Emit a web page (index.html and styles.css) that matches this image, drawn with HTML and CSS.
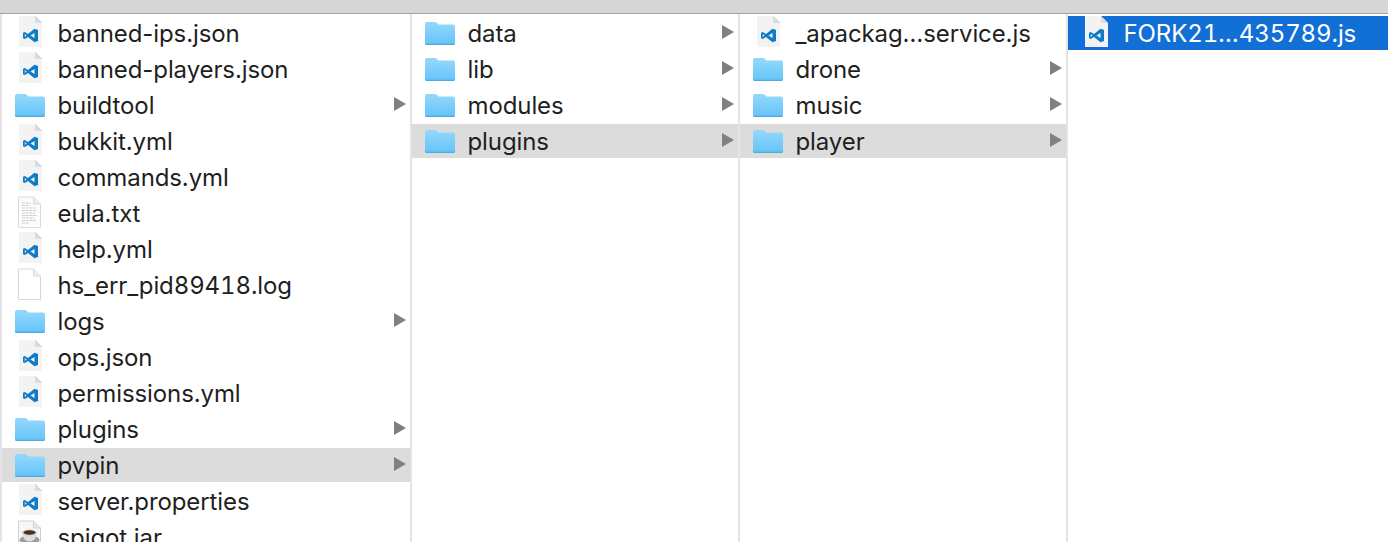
FILE: index.html
```html
<!DOCTYPE html>
<html lang="en">
<head>
<meta charset="utf-8">
<title>Finder columns</title>
<link rel="stylesheet" href="styles.css">
</head>
<body>
<svg class="defs" width="0" height="0" aria-hidden="true">
  <defs>
    <linearGradient id="fold" x1="0" y1="0" x2="0" y2="1">
      <stop offset="0" stop-color="#8ad4fb"/>
      <stop offset="1" stop-color="#64c3f8"/>
    </linearGradient>
    <symbol id="folder" viewBox="0 0 30 26">
      <path d="M0 4C0 2.800 1 2 2.200 2H9.800c1 0 1.600.4 2.200 1l1.400 1.600H28c1.200 0 2 .8 2 2V23c0 1.200-.8 2-2 2H2c-1.200 0-2-.8-2-2z" fill="#8fd6fb"/>
      <path d="M0 8.200C0 7.400.6 7 1.200 7H28.800C29.400 7 30 7.400 30 8.200V23c0 1.200-.8 2-2 2H2c-1.200 0-2-.8-2-2z" fill="url(#fold)"/>
      <path d="M0 23c0 1.200.8 2 2 2h26c1.200 0 2-.8 2-2v-.8c0 1-.8 1.600-2 1.600H2c-1.200 0-2-.6-2-1.600z" fill="#4fa9dc"/>
    </symbol>
    <symbol id="vscode" viewBox="0 0 23 31">
      <path d="M0 0H16L23 7V31H0z" fill="#f3f3f3"/>
      <path d="M16 0V7H23z" fill="#dcdcdc"/>
      <path d="M16 0L23 7" stroke="#c4c4c4" stroke-width=".6" fill="none"/>
      <path fill-rule="evenodd" d="M15.500 12 9 18.300 5.800 15.800 4 16.700V23.300L5.800 24.200 9 21.700 15.500 28 19 26.500V13.500zM15.500 17V23L11.500 20zM5.800 18.200 7.500 20 5.800 21.800z" fill="#0f7bc6" transform="translate(0 2.500) scale(1 .85)"/>
    </symbol>
    <symbol id="text" viewBox="0 0 25 33">
      <path d="M1.500 1H16.500L23.500 8V31.500H1.500z" fill="#fcfcfc" stroke="#dadada" stroke-linejoin="round"/>
      <path d="M16.500 1V8H23.500" fill="#ececec" stroke="#dadada" stroke-linejoin="round"/>
      <path d="M5 7H14M5 9.500H13M5 12H19M5 14.500H20M5 17H18M5 19.500H20M5 22H17M5 24.500H19M5 27H12" stroke="#cdcdcd" stroke-width="1" stroke-dasharray="3 .6"/>
    </symbol>
    <symbol id="blank" viewBox="0 0 25 33">
      <path d="M1.500 1H16.500L23.500 8V31.500H1.500z" fill="#fff" stroke="#d6d6d6" stroke-linejoin="round"/>
      <path d="M16.500 1V8H23.500" fill="#f0f0f0" stroke="#d6d6d6" stroke-linejoin="round"/>
    </symbol>
    <symbol id="jar" viewBox="0 0 25 33">
      <path d="M1.500 1H16.500L23.500 8V31.500H1.500z" fill="#f6f6f6" stroke="#d0d0d0" stroke-linejoin="round"/>
      <path d="M16.500 1V8H23.500" fill="#e6e6e6" stroke="#d0d0d0" stroke-linejoin="round"/>
      <ellipse cx="12.500" cy="20" rx="10" ry="4.500" fill="#9c9c9c"/>
      <path d="M5.500 12.500C5.500 18 8 21.500 12.500 21.500S19.500 18 19.500 12.500z" fill="#dedede"/>
      <ellipse cx="12.500" cy="12.500" rx="7.500" ry="3" fill="#c6c6c6"/>
      <ellipse cx="12.500" cy="12.500" rx="6" ry="2.200" fill="#4a2f1c"/>
    </symbol>
  </defs>
</svg>
<header class="toolbar"></header>
<main class="browser">
  <section class="column column-first">
    <div class="row"><svg class="icon icon-doc"><use href="#vscode"/></svg><span class="name">banned-ips.json</span></div>
    <div class="row"><svg class="icon icon-doc"><use href="#vscode"/></svg><span class="name">banned-players.json</span></div>
    <div class="row"><svg class="icon icon-folder"><use href="#folder"/></svg><span class="name">buildtool</span><span class="arrow"></span></div>
    <div class="row"><svg class="icon icon-doc"><use href="#vscode"/></svg><span class="name">bukkit.yml</span></div>
    <div class="row"><svg class="icon icon-doc"><use href="#vscode"/></svg><span class="name">commands.yml</span></div>
    <div class="row"><svg class="icon icon-page"><use href="#text"/></svg><span class="name">eula.txt</span></div>
    <div class="row"><svg class="icon icon-doc"><use href="#vscode"/></svg><span class="name">help.yml</span></div>
    <div class="row"><svg class="icon icon-page"><use href="#blank"/></svg><span class="name name-digits">hs_err_pid89418.log</span></div>
    <div class="row"><svg class="icon icon-folder"><use href="#folder"/></svg><span class="name">logs</span><span class="arrow"></span></div>
    <div class="row"><svg class="icon icon-doc"><use href="#vscode"/></svg><span class="name">ops.json</span></div>
    <div class="row"><svg class="icon icon-doc"><use href="#vscode"/></svg><span class="name">permissions.yml</span></div>
    <div class="row"><svg class="icon icon-folder"><use href="#folder"/></svg><span class="name">plugins</span><span class="arrow"></span></div>
    <div class="row row-open"><svg class="icon icon-folder"><use href="#folder"/></svg><span class="name">pvpin</span><span class="arrow"></span></div>
    <div class="row"><svg class="icon icon-doc"><use href="#vscode"/></svg><span class="name">server.properties</span></div>
    <div class="row"><svg class="icon icon-page"><use href="#jar"/></svg><span class="name">spigot.jar</span></div>
  </section>
  <section class="column">
    <div class="row"><svg class="icon icon-folder"><use href="#folder"/></svg><span class="name">data</span><span class="arrow"></span></div>
    <div class="row"><svg class="icon icon-folder"><use href="#folder"/></svg><span class="name">lib</span><span class="arrow"></span></div>
    <div class="row"><svg class="icon icon-folder"><use href="#folder"/></svg><span class="name">modules</span><span class="arrow"></span></div>
    <div class="row row-open"><svg class="icon icon-folder"><use href="#folder"/></svg><span class="name">plugins</span><span class="arrow"></span></div>
  </section>
  <section class="column">
    <div class="row"><svg class="icon icon-doc"><use href="#vscode"/></svg><span class="name">_apackag…service.js</span></div>
    <div class="row"><svg class="icon icon-folder"><use href="#folder"/></svg><span class="name">drone</span><span class="arrow"></span></div>
    <div class="row"><svg class="icon icon-folder"><use href="#folder"/></svg><span class="name">music</span><span class="arrow"></span></div>
    <div class="row row-open"><svg class="icon icon-folder"><use href="#folder"/></svg><span class="name">player</span><span class="arrow"></span></div>
  </section>
  <section class="column column-last">
    <div class="row row-selected"><svg class="icon icon-doc"><use href="#vscode"/></svg><span class="name name-digits">FORK21…435789.js</span></div>
  </section>
</main>
</body>
</html>
```
FILE: styles.css
```css
* { box-sizing: border-box; }
html, body {
  margin: 0;
  height: 100%;
  overflow: hidden;
  background: #fff;
}
body {
  display: flex;
  flex-direction: column;
  font-family: Inter, "Liberation Sans", Arial, sans-serif;
  font-size: 24px;
  letter-spacing: -0.1px;
  color: #1f1f1f;
}
.defs { position: absolute; }
.toolbar {
  flex: none;
  height: 14px;
  background: #d8d6d8;
  border-bottom: 1px solid #a4a4a4;
}
.browser {
  flex: 1;
  min-height: 0;
  display: flex;
  overflow: hidden;
}
.column {
  flex: none;
  width: 328px;
  padding-top: 2px;
  display: flex;
  flex-direction: column;
  gap: 2px;
  border-right: 2px solid #e4e4e4;
  overflow: hidden;
}
.column-first {
  width: 412px;
  border-left: 2px solid #e4e4e4;
}
.column-last {
  flex: 1;
  border-right: 0;
}
.row {
  flex: none;
  height: 34px;
  position: relative;
  display: flex;
  align-items: center;
  padding-left: 55.5px;
  padding-right: 4px;
}
.row-open { background: #dcdcdc; }
.row-selected {
  background: #126fd6;
  color: #fff;
}
.icon {
  position: absolute;
  top: 0;
}
.icon-doc { left: 17px; width: 23px; height: 31px; }
.icon-page { left: 15px; width: 25px; height: 33px; }
.icon-folder { left: 13px; width: 30px; height: 26px; top: 4px; }
.name {
  flex: 1;
  white-space: nowrap;
  padding-top: 1px;
}
.name-digits { font-variant-numeric: tabular-nums; }
.arrow {
  flex: none;
  width: 0;
  height: 0;
  border-left: 12px solid #808080;
  border-top: 7px solid transparent;
  border-bottom: 7px solid transparent;
  margin-bottom: 2px;
}
```
